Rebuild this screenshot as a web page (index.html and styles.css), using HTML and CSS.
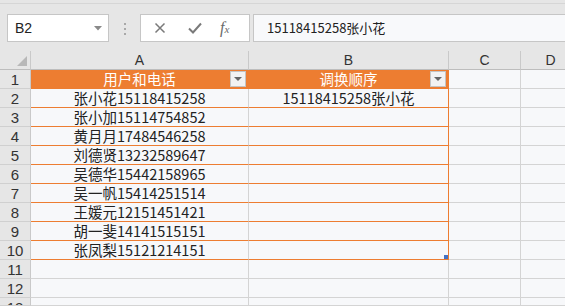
FILE: index.html
```html
<!DOCTYPE html>
<html lang="zh-CN">
<head>
    <meta charset="UTF-8">
    <title>调换顺序</title>
    <link rel="stylesheet" href="styles.css">
</head>
<body>
    <div class="toolbar">
        <div class="name-box">
            <span>B2</span>
            <svg class="name-arrow" width="8" height="5" viewBox="0 0 8 5"><path d="M0 0H8L4 4.5Z" fill="#8a8a8a"/></svg>
        </div>
        <div class="grip"><i></i><i></i><i></i></div>
        <div class="fx-box">
            <svg width="12" height="12" viewBox="0 0 12 12"><path d="M1.5 1.5L10.5 10.5M10.5 1.5L1.5 10.5" stroke="#7a7a7a" stroke-width="1.5" fill="none"/></svg>
            <svg width="14" height="12" viewBox="0 0 14 12"><path d="M1 6.5L5 10.5L13 1.5" stroke="#7a7a7a" stroke-width="2" fill="none"/></svg>
            <span class="fx">f<sub>x</sub></span>
        </div>
        <div class="formula">15118415258张小花</div>
    </div>

    <div class="sheet">
        <div class="corner"><span class="corner-tri"></span></div>
        <div class="col-head">A</div>
        <div class="col-head">B</div>
        <div class="col-head">C</div>
        <div class="col-head">D</div>

        <div class="row-head">1</div>
        <div class="cell th">用户和电话<span class="filter"></span></div>
        <div class="cell th">调换顺序<span class="filter"></span></div>
        <div class="cell"></div>
        <div class="cell"></div>

        <div class="row-head">2</div>
        <div class="cell ta">张小花15118415258</div>
        <div class="cell tb">15118415258张小花</div>
        <div class="cell"></div>
        <div class="cell"></div>

        <div class="row-head">3</div>
        <div class="cell ta">张小加15114754852</div>
        <div class="cell tb"></div>
        <div class="cell"></div>
        <div class="cell"></div>

        <div class="row-head">4</div>
        <div class="cell ta">黄月月17484546258</div>
        <div class="cell tb"></div>
        <div class="cell"></div>
        <div class="cell"></div>

        <div class="row-head">5</div>
        <div class="cell ta">刘德贤13232589647</div>
        <div class="cell tb"></div>
        <div class="cell"></div>
        <div class="cell"></div>

        <div class="row-head">6</div>
        <div class="cell ta">吴德华15442158965</div>
        <div class="cell tb"></div>
        <div class="cell"></div>
        <div class="cell"></div>

        <div class="row-head">7</div>
        <div class="cell ta">吴一帆15414251514</div>
        <div class="cell tb"></div>
        <div class="cell"></div>
        <div class="cell"></div>

        <div class="row-head">8</div>
        <div class="cell ta">王媛元12151451421</div>
        <div class="cell tb"></div>
        <div class="cell"></div>
        <div class="cell"></div>

        <div class="row-head">9</div>
        <div class="cell ta">胡一斐14141515151</div>
        <div class="cell tb"></div>
        <div class="cell"></div>
        <div class="cell"></div>

        <div class="row-head">10</div>
        <div class="cell ta">张凤梨15121214151</div>
        <div class="cell tb last"><span class="resize"></span></div>
        <div class="cell"></div>
        <div class="cell"></div>

        <div class="row-head">11</div>
        <div class="cell"></div>
        <div class="cell"></div>
        <div class="cell"></div>
        <div class="cell"></div>

        <div class="row-head">12</div>
        <div class="cell"></div>
        <div class="cell"></div>
        <div class="cell"></div>
        <div class="cell"></div>

        <div class="row-head">13</div>
        <div class="cell"></div>
        <div class="cell"></div>
        <div class="cell"></div>
        <div class="cell"></div>
    </div>
</body>
</html>
```

FILE: styles.css
```css
/* General */
body {
    margin: 0;
    width: 565px;
    height: 306px;
    overflow: hidden;
    background: #e6e6e6;
    font-family: 'Noto Sans CJK SC', sans-serif;
    color: #222;
}

/* Toolbar */
.toolbar {
    display: flex;
    align-items: flex-start;
    box-sizing: border-box;
    height: 48px;
    margin-top: 3px;
    padding: 10px 0 0 7px;
    border-top: 1px solid #d6d6d6;
}

.name-box {
    display: flex;
    align-items: center;
    justify-content: space-between;
    box-sizing: border-box;
    width: 102px;
    height: 28px;
    padding: 0 6px 0 7px;
    background: #fff;
    border: 1px solid #c6c6c6;
    font-family: 'Liberation Sans', sans-serif;
    font-size: 14px;
}

.grip {
    display: flex;
    flex-direction: column;
    gap: 3px;
    margin: 9px 14px 0 15px;
}

.grip i {
    width: 2px;
    height: 2px;
    background: #a8a8a8;
}

.fx-box {
    display: flex;
    align-items: center;
    box-sizing: border-box;
    width: 110px;
    height: 28px;
    padding: 0 0 0 13px;
    gap: 22px;
    background: #fff;
    border: 1px solid #c6c6c6;
}

.fx {
    font-family: 'Liberation Serif', serif;
    font-style: italic;
    font-size: 16px;
    color: #6a6a6a;
    margin-left: -4px;
}

.fx sub {
    font-size: 11px;
    vertical-align: 0;
}

.formula {
    flex: 1;
    box-sizing: border-box;
    height: 28px;
    margin-left: 3px;
    padding: 0 0 0 13px;
    background: #f8f9fb;
    border-top: 1px solid #c6c6c6;
    border-bottom: 1px solid #c6c6c6;
    border-left: 1px solid #c6c6c6;
    font-size: 13px;
    line-height: 26px;
    color: #222;
}

/* Sheet */
.sheet {
    display: grid;
    grid-template-columns: 31px 218px 200px 72px 60px;
    grid-template-rows: 19px repeat(12, 19px) 8px;
    font-size: 14.5px;
}

.corner,
.col-head,
.row-head {
    box-sizing: border-box;
    background: #e6e6e6;
    border-right: 1px solid #c9c9c9;
    border-bottom: 1px solid #bdbdbd;
    font-family: 'Liberation Sans', sans-serif;
    color: #333;
    text-align: center;
    line-height: 19px;
    overflow: hidden;
}

.corner {
    position: relative;
}

.corner-tri {
    position: absolute;
    right: 3px;
    bottom: 3px;
    width: 0;
    height: 0;
    border-left: 10px solid transparent;
    border-bottom: 10px solid #b8b8b8;
}

.col-head {
    font-size: 14px;
}

.row-head {
    font-size: 15px;
    border-bottom-color: #d0d0d0;
}

.cell {
    position: relative;
    box-sizing: border-box;
    background: #f7f8fa;
    border-right: 1px solid #d4d4d4;
    border-bottom: 1px solid #d4d4d4;
    text-align: center;
    line-height: 18px;
    white-space: nowrap;
}

.cell.th {
    background: #ed7d31;
    border-right-color: #ed7d31;
    border-bottom-color: #ed7d31;
    color: #fff;
}

.cell.ta,
.cell.tb {
    border-bottom-color: #ed7d31;
}

.cell.tb {
    border-right-color: #ed7d31;
}

.filter {
    position: absolute;
    right: 2px;
    top: 1px;
    box-sizing: border-box;
    width: 16px;
    height: 16px;
    background: #f2f2f2;
    border: 1px solid #c4c4c4;
}

.filter::after {
    content: '';
    position: absolute;
    left: 3px;
    top: 5px;
    border-left: 4px solid transparent;
    border-right: 4px solid transparent;
    border-top: 4px solid #666;
}

.resize {
    position: absolute;
    right: 0;
    bottom: 0;
    width: 4px;
    height: 4px;
    background: #4472c4;
}
```
